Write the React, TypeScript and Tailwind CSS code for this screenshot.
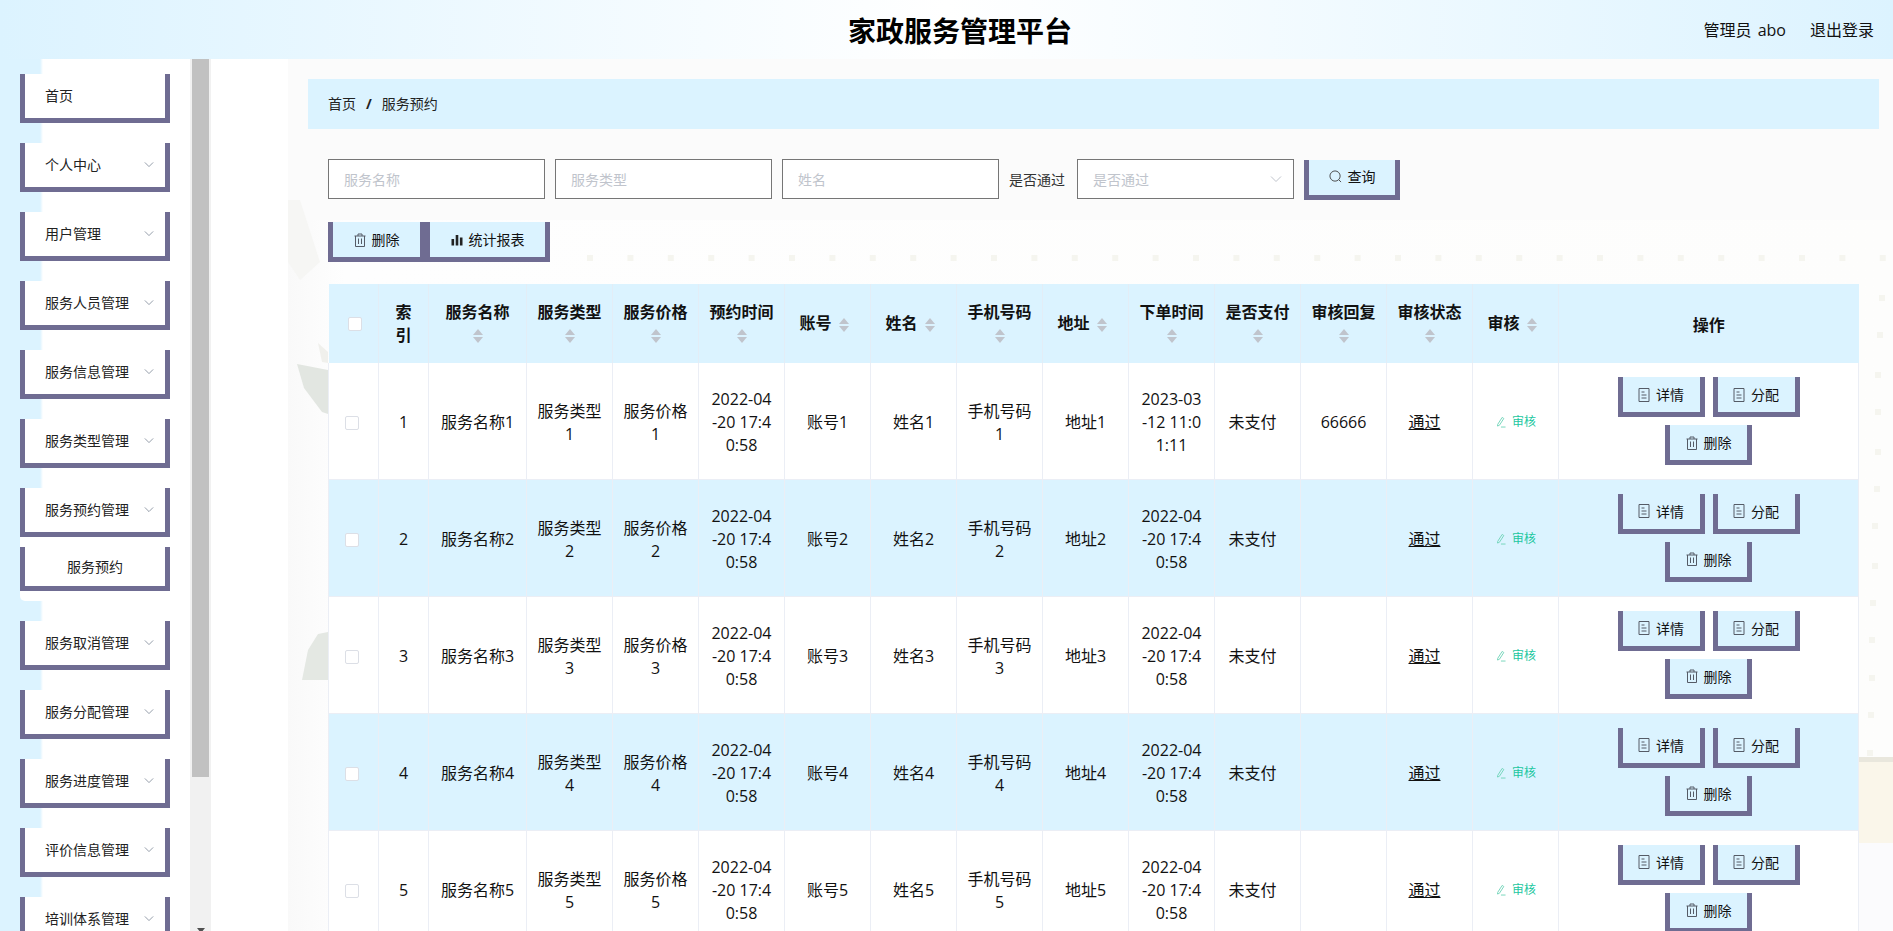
const menus = [
  "首页",
  "个人中心",
  "用户管理",
  "服务人员管理",
  "服务信息管理",
  "服务类型管理",
  "服务预约管理",
  "服务取消管理",
  "服务分配管理",
  "服务进度管理",
  "评价信息管理",
  "培训体系管理",
];

const columns = [
  { label: "服务名称", sort: true },
  { label: "服务类型", sort: true },
  { label: "服务价格", sort: true },
  { label: "预约时间", sort: true },
  { label: "账号", sort: true },
  { label: "姓名", sort: true },
  { label: "手机号码", sort: true },
  { label: "地址", sort: true },
  { label: "下单时间", sort: true },
  { label: "是否支付", sort: true },
  { label: "审核回复", sort: true },
  { label: "审核状态", sort: true },
  { label: "审核", sort: true },
];

const rows = [1, 2, 3, 4, 5].map((n) => ({
  n,
  orderTime: n === 1 ? "2023-03-12 11:01:11" : "2022-04-20 17:40:58",
  reply: n === 1 ? "66666" : "",
}));

const dotsTop = Array.from({ length: 33 }, (_, i) => 590 + i * 40.4);
const dotsRight = [
  [1882, 298], [1880, 335], [1878, 375], [1878, 412], [1878, 452], [1877, 489], [1875, 526],
  [1875, 566], [1873, 603], [1872, 640], [1872, 678], [1871, 715], [1870, 753],
];

function Chevron({ className }: { className: string }) {
  return (
    <svg viewBox="0 0 12 8" className={className} fill="none" stroke="currentColor" strokeWidth="1">
      <path d="M1 1.5 L6 6.5 L11 1.5" />
    </svg>
  );
}

function TrashIcon() {
  return (
    <svg viewBox="0 0 12 14" className="w-[12px] h-[14px] shrink-0 text-[#555b66]" fill="none" stroke="currentColor" strokeWidth="1">
      <path d="M0.5 3 H11.5 M1.5 3 V13.5 H10.5 V3 M4 3 V1 H8 V3 M4.5 5.5 V11 M7.5 5.5 V11" />
    </svg>
  );
}

function DocIcon() {
  return (
    <svg viewBox="0 0 12 14" className="w-[12px] h-[14px] shrink-0 text-[#555b66]" fill="none" stroke="currentColor" strokeWidth="1">
      <path d="M1 0.5 H11 V13.5 H1 Z M3.5 4 H6.5 M3.5 7 H8.5 M3.5 10 H8.5" />
    </svg>
  );
}

function ChartIcon() {
  return (
    <svg viewBox="0 0 12 12" className="w-[12px] h-[12px] shrink-0 text-[#222]" fill="currentColor">
      <rect x="0.5" y="5" width="2.6" height="6.5" />
      <rect x="4.7" y="1" width="2.6" height="10.5" />
      <rect x="8.9" y="3.5" width="2.6" height="8" />
    </svg>
  );
}

function SearchIcon() {
  return (
    <svg viewBox="0 0 14 14" className="w-[13px] h-[13px] shrink-0 text-[#444]" fill="none" stroke="currentColor" strokeWidth="1">
      <circle cx="6.5" cy="6.5" r="5.5" />
      <path d="M10.5 10.5 L13 13" />
    </svg>
  );
}

function EditIcon() {
  return (
    <svg viewBox="0 0 12 12" className="w-[11px] h-[12px] shrink-0 text-[#6fd3b8]" fill="none" stroke="currentColor" strokeWidth="1">
      <path d="M3 8.5 L7.8 1 L9.6 2.2 L4.8 9.6 L2.7 10.4 Z M6.5 11.5 H11.5" />
    </svg>
  );
}

function ActionButton({ icon, label, className }: { icon: React.ReactNode; label: string; className: string }) {
  return (
    <button
      type="button"
      className={`h-[40px] border-x-[5px] border-b-[5px] border-[#6f6c92] bg-[#dbf3ff] flex items-center justify-center gap-[6px] text-[14px] text-[#111] ${className}`}
    >
      {icon}
      <span>{label}</span>
    </button>
  );
}

function SortCaret() {
  return (
    <span className="inline-flex w-[24px] h-[14px] flex-col items-center justify-between align-middle">
      <span className="w-0 h-0 border-x-[5px] border-x-transparent border-b-[6px] border-b-[#c0c4cc]" />
      <span className="w-0 h-0 border-x-[5px] border-x-transparent border-t-[6px] border-t-[#c0c4cc]" />
    </span>
  );
}

function Checkbox({ className }: { className: string }) {
  return <span className={`block w-[14px] h-[14px] bg-white border border-[#dcdfe6] rounded-[2px] ${className}`} />;
}

function MenuItem({ label }: { label: string }) {
  return (
    <div className="ml-[20px] w-[150px] h-[49px] border-x-[5px] border-b-[5px] border-[#6f6c92] bg-white flex items-center justify-between pl-[20px] pr-[11px] pb-[2px] text-[14px] text-[#222]">
      <span>{label}</span>
      {label !== "首页" && <Chevron className="w-[10px] h-[7px] text-[#7f8a99]" />}
    </div>
  );
}

function Sidebar() {
  return (
    <aside className="w-[211px] shrink-0 flex h-[872px] overflow-hidden bg-white">
      <div className="w-[190px] shrink-0 pt-[15px] flex flex-col gap-[20px] bg-[linear-gradient(to_right,#dcf3ff_40px,#ffffff_43px)]">
        {menus.map((m) => (
          <div key={m} className="flex flex-col">
            <MenuItem label={m} />
            {m === "服务预约管理" && (
              <div className="ml-[20px] py-[10px] bg-white rounded-bl-[5px]">
                <div className="w-[150px] h-[44px] border-x-[5px] border-b-[5px] border-[#6f6c92] bg-white flex items-center justify-center text-[14px] text-[#222]">
                  服务预约
                </div>
              </div>
            )}
          </div>
        ))}
      </div>
      <div className="w-[21px] shrink-0 bg-[#f1f1f1] flex flex-col items-center">
        <div className="w-[17px] h-[718px] bg-[#c1c1c1]" />
        <div className="mt-auto mb-[-2px] w-0 h-0 border-x-[4px] border-x-transparent border-t-[5px] border-t-[#505050]" />
      </div>
    </aside>
  );
}

function Backdrop() {
  return (
    <svg viewBox="288 59 1605 872" className="absolute inset-0 w-full h-full" preserveAspectRatio="none">
      <defs>
        <linearGradient id="pageFade" x1="0" x2="1" y1="0" y2="0">
          <stop offset="0" stopColor="#f9f9f9" />
          <stop offset="0.035" stopColor="#fefefe" />
          <stop offset="1" stopColor="#fdfdfc" />
        </linearGradient>
      </defs>
      <rect x="288" y="220" width="1605" height="711" fill="url(#pageFade)" />
      <path d="M288 200 L300 200 L320 262 L300 280 L288 262 Z" fill="#f6f6f4" />
      <path d="M318 343 L328 352 L328 363 L322 362 Z" fill="#f0f0ec" />
      <path d="M297 364 L328 370 L328 414 L322 412 L304 388 Z" fill="#e2e6e1" />
      <path d="M318 634 L328 632 L328 680 L302 680 L308 650 Z" fill="#e4e8e3" />
      <rect x="1859" y="757" width="34" height="5" fill="#e9e7dd" />
      <rect x="1859" y="762" width="34" height="81" fill="#faf6ea" />
      <rect x="1859" y="843" width="34" height="88" fill="#fbfbfd" />
      {dotsTop.map((x) => (
        <rect key={x} x={x - 3} y={255} width="6" height="6" fill="#f5f5ef" />
      ))}
      {dotsRight.map(([x, y]) => (
        <rect key={y} x={x - 3} y={y - 3} width="6" height="6" fill="#f5f5ef" />
      ))}
    </svg>
  );
}

function SearchBar() {
  const inputClass =
    "w-[217px] h-[40px] bg-white border border-[#767676] px-[15px] text-[14px] outline-none placeholder:text-[#c0c4cc]";
  return (
    <div className="flex items-start gap-[10px] mt-[30px] ml-[20px]">
      <input className={inputClass} placeholder="服务名称" />
      <input className={inputClass} placeholder="服务类型" />
      <input className={inputClass} placeholder="姓名" />
      <label className="h-[40px] flex items-center text-[14px] text-[#333] mr-[2px]">是否通过</label>
      <div className="relative">
        <input readOnly className={inputClass} placeholder="是否通过" />
        <Chevron className="absolute right-[12px] top-[16px] w-[12px] h-[8px] text-[#c0c4cc]" />
      </div>
      <ActionButton icon={<SearchIcon />} label="查询" className="w-[96px] mt-[1px] pb-[2px]" />
    </div>
  );
}

function DataTable() {
  const cell = "border-r border-b border-[#ebeef5] pt-[4px]";
  return (
    <table className="mt-[22px] w-[1531px] table-fixed border-collapse text-center text-[16px] leading-[23px] text-[#111]">
      <colgroup>
        <col className="w-[50px]" />
        <col className="w-[50px]" />
        <col className="w-[98px]" />
        {columns.slice(1).map((c) => (
          <col key={c.label} className="w-[86px]" />
        ))}
        <col />
      </colgroup>
      <thead>
        <tr className="h-[79px] bg-[#dbf3ff]">
          <th className="border-r border-[#e3edf6]">
            <Checkbox className="ml-[19px]" />
          </th>
          <th className="border-r border-[#e3edf6] px-[10px] font-bold">索引</th>
          {columns.map((c) => (
            <th key={c.label} className="border-r border-[#e3edf6] px-[10px] font-bold">
              {c.label}
              {c.sort && <SortCaret />}
            </th>
          ))}
          <th className="pt-[3px] font-bold">操作</th>
        </tr>
      </thead>
      <tbody>
        {rows.map((r) => (
          <tr key={r.n} className={`${r.n === 1 ? "h-[116px]" : "h-[117px]"} ${r.n % 2 === 0 ? "bg-[#dbf3ff]" : "bg-white"}`}>
            <td className="border border-t-0 border-[#ebeef5] pt-[4px]">
              <Checkbox className="ml-[16px]" />
            </td>
            <td className={`${cell} px-[10px]`}>{r.n}</td>
            {[
              `服务名称${r.n}`,
              `服务类型${r.n}`,
              `服务价格${r.n}`,
              "2022-04-20 17:40:58",
              `账号${r.n}`,
              `姓名${r.n}`,
              `手机号码${r.n}`,
              `地址${r.n}`,
              r.orderTime,
            ].map((text, i) => (
              <td key={i} className={`${cell} px-[10px] break-all`}>
                {text}
              </td>
            ))}
            <td className={`${cell} px-[10px]`}>
              <span className="mr-[10px]">未支付</span>
            </td>
            <td className={`${cell} px-[10px]`}>{r.reply}</td>
            <td className={`${cell} px-[10px]`}>
              <span className="mr-[10px] underline">通过</span>
            </td>
            <td className={cell}>
              <span className="inline-flex items-center gap-[6px] text-[12px] text-[#1cc7a0] align-middle mb-[2px]">
                <EditIcon />
                审核
              </span>
            </td>
            <td className="border-r border-b border-[#ebeef5] px-[20px] align-top">
              <div className="flex flex-wrap justify-center gap-[8px] mt-[14px]">
                <ActionButton icon={<DocIcon />} label="详情" className="w-[87px]" />
                <ActionButton icon={<DocIcon />} label="分配" className="w-[87px]" />
                <ActionButton icon={<TrashIcon />} label="删除" className="w-[87px]" />
              </div>
            </td>
          </tr>
        ))}
      </tbody>
    </table>
  );
}

export default function App() {
  return (
    <div className="w-full h-[931px] overflow-hidden flex flex-col font-['Open_Sans','Noto_Sans_CJK_SC',sans-serif]">
      <header className="h-[59px] shrink-0 flex items-center pl-[848px] pr-[19px] bg-[linear-gradient(to_right,#dcf3ff,#ffffff_50%,#dcf3ff)]">
        <h1 className="text-[28px] font-bold text-black mt-[3px]">家政服务管理平台</h1>
        <div className="ml-auto flex items-center gap-[24px] text-[16px] text-[#111]">
          <span className="[word-spacing:2px]">管理员 abo</span>
          <span>退出登录</span>
        </div>
      </header>
      <div className="flex flex-1 min-h-0">
        <Sidebar />
        <div className="w-[77px] shrink-0 bg-white" />
        <main className="relative flex-1 min-w-0 bg-[#fbfbfb] overflow-hidden">
          <Backdrop />
          <div className="relative pt-[20px] pl-[20px]">
            <div className="mr-[14px] h-[50px] bg-[#dbf3ff] flex items-center pl-[20px] pb-[2px] text-[14px] text-[#222]">
              <span>首页</span>
              <span className="mx-[10px] font-bold">/</span>
              <span>服务预约</span>
            </div>
            <SearchBar />
            <div className="flex mt-[22px] ml-[20px]">
              <ActionButton icon={<TrashIcon />} label="删除" className="w-[97px]" />
              <ActionButton icon={<ChartIcon />} label="统计报表" className="w-[125px]" />
            </div>
            <div className="ml-[20px]">
              <DataTable />
            </div>
          </div>
        </main>
      </div>
    </div>
  );
}
